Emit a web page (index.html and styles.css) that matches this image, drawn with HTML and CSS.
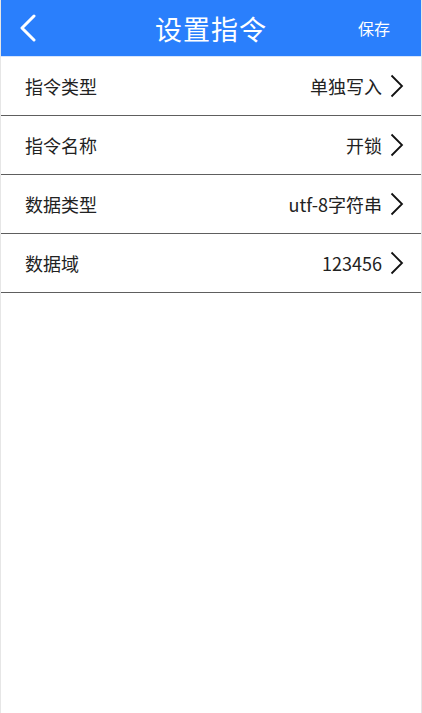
FILE: index.html
```html
<!DOCTYPE html>
<html lang="zh-CN">
  <head>
    <meta charset="UTF-8" />
    <meta name="viewport" content="width=device-width, initial-scale=1" />
    <title>设置指令</title>
    <link rel="stylesheet" href="styles.css">
  </head>
  <body>
    <div class="page">
      <header>
        <a class="back" href="#" aria-label="返回">
          <svg width="18" height="28" viewBox="0 0 18 28">
            <path d="M15 2 L3 14 L15 26" fill="none" stroke="#fff" stroke-width="3" stroke-linecap="round" stroke-linejoin="round" />
          </svg>
        </a>
        <h1>设置指令</h1>
        <a class="save" href="#">保存</a>
      </header>

      <ul class="settings">
        <li class="row">
          <span class="label">指令类型</span>
          <span class="value">单独写入</span>
          <svg class="arrow" width="14" height="24" viewBox="0 0 14 24">
            <path d="M1.5 1.5 L12 12 L1.5 22.5" fill="none" stroke="#111" stroke-width="1.8" />
          </svg>
        </li>
        <li class="row">
          <span class="label">指令名称</span>
          <span class="value">开锁</span>
          <svg class="arrow" width="14" height="24" viewBox="0 0 14 24">
            <path d="M1.5 1.5 L12 12 L1.5 22.5" fill="none" stroke="#111" stroke-width="1.8" />
          </svg>
        </li>
        <li class="row">
          <span class="label">数据类型</span>
          <span class="value">utf-8字符串</span>
          <svg class="arrow" width="14" height="24" viewBox="0 0 14 24">
            <path d="M1.5 1.5 L12 12 L1.5 22.5" fill="none" stroke="#111" stroke-width="1.8" />
          </svg>
        </li>
        <li class="row">
          <span class="label">数据域</span>
          <span class="value">123456</span>
          <svg class="arrow" width="14" height="24" viewBox="0 0 14 24">
            <path d="M1.5 1.5 L12 12 L1.5 22.5" fill="none" stroke="#111" stroke-width="1.8" />
          </svg>
        </li>
      </ul>
    </div>
  </body>
</html>
```

FILE: styles.css
```css
* {
  margin: 0;
  padding: 0;
  box-sizing: border-box;
  font-family: "Noto Sans CJK SC", "Noto Sans", sans-serif;
}
body {
  background: #fff;
  color: #222;
}
a {
  color: inherit;
  text-decoration: none;
}
ul {
  list-style: none;
}

.page {
  min-height: 100vh;
  border-left: 1px solid #e6e6e6;
  border-right: 1px solid #e6e6e6;
}

/* Header */
header {
  height: 57px;
  background: #2a7ffc;
  border-bottom: 1px solid #d6e5fc;
  color: #fff;
  display: grid;
  grid-template-columns: 80px 1fr 80px;
  align-items: center;
  padding: 0 18px;
}
.back {
  display: flex;
  align-items: center;
}
header h1 {
  text-align: center;
  font-size: 27px;
  font-weight: 400;
  letter-spacing: 1px;
}
.save {
  text-align: right;
  padding-right: 13px;
  font-size: 16px;
}

/* Rows */
.row {
  height: 59px;
  display: flex;
  align-items: center;
  padding: 0 17px 0 24px;
  border-bottom: 1px solid #5e5e5e;
  font-size: 18px;
}
.label {
  flex: 1;
}
.value {
  margin-right: 8px;
}
.arrow {
  display: block;
}
```
